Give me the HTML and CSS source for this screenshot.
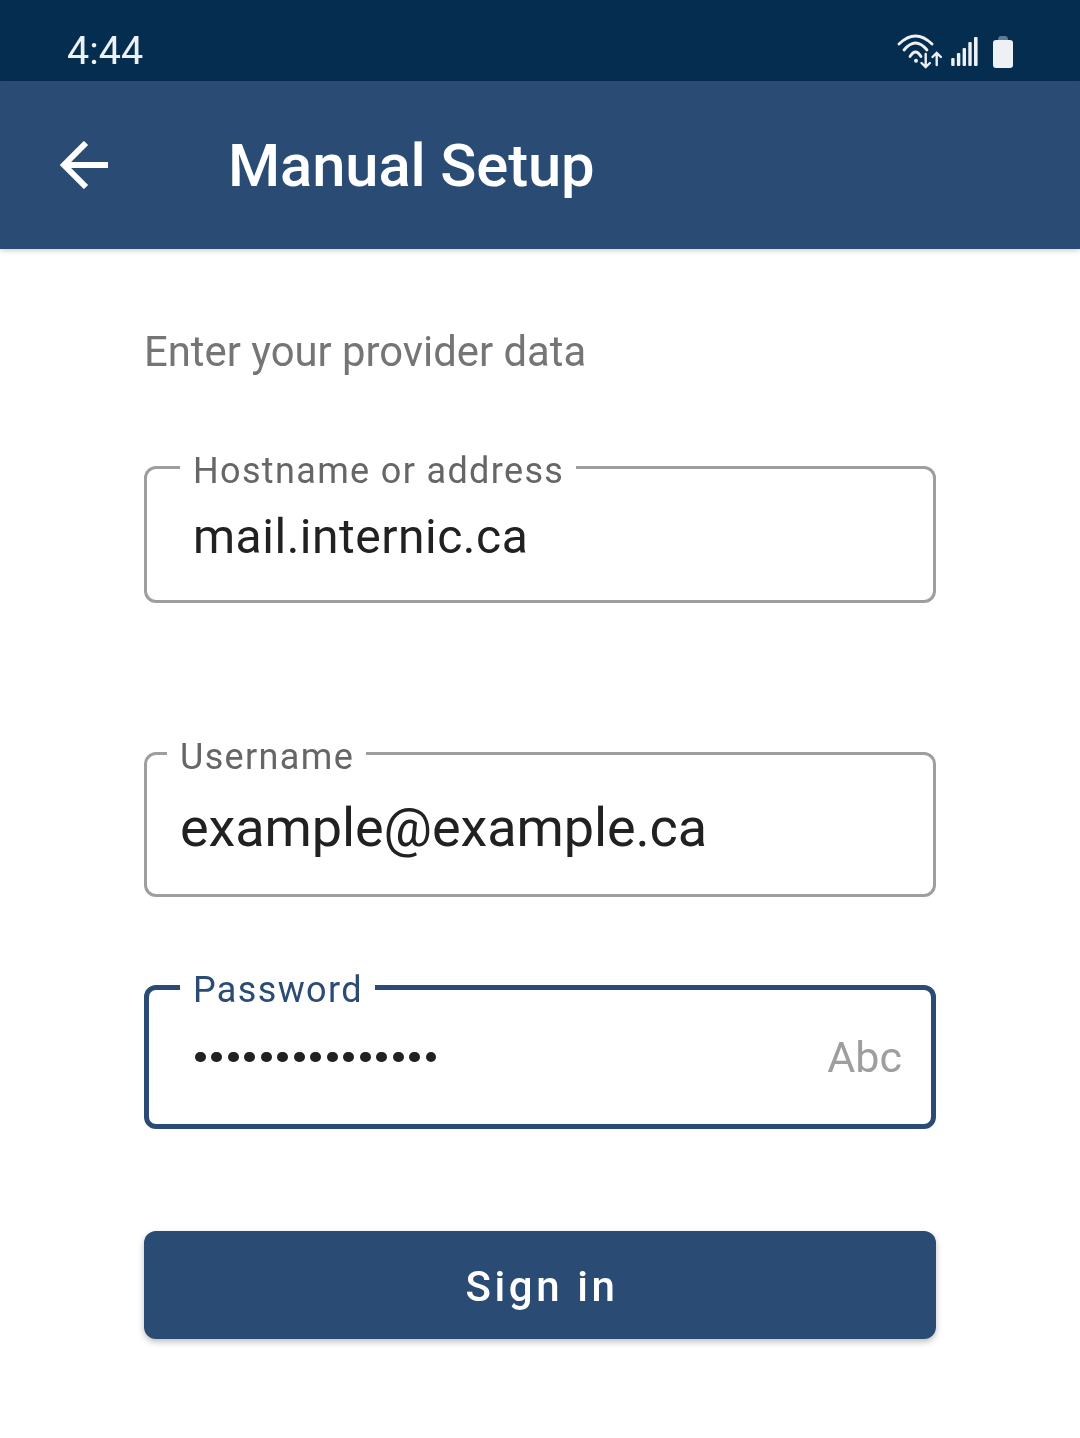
FILE: index.html
```html
<!DOCTYPE html>
<html lang="en">
<head>
<meta charset="utf-8">
<title>Manual Setup</title>
<link rel="stylesheet" href="styles.css">
</head>
<body>
<div class="status">
  <span class="time">4:44</span>
  <div class="status-icons">
    <svg class="ic-wifi" width="46" height="36" viewBox="0 0 46 36" fill="none" stroke="#eef0f3" stroke-linecap="round">
      <path d="M2 10Q18.500 -6 35 10" stroke-width="2.800"/>
      <path d="M7 16Q18.500 2 30 16" stroke-width="2.800"/>
      <path d="M13 22.500Q18.500 13.500 24 22.500" stroke-width="2.800"/>
      <circle cx="19" cy="26.700" r="2" fill="#eef0f3" stroke="none"/>
      <path d="M28.700 20V33M24.500 29l4.200 4 4.200-4" stroke-width="2.400"/>
      <path d="M39.700 31V19.500M35.500 23l4.200-4 4.200 4" stroke-width="2.400"/>
    </svg>
    <svg class="ic-signal" width="28" height="30" viewBox="0 0 28 30" fill="#eef0f3">
      <rect x="0.200" y="21" width="3.400" height="8" rx="1"/>
      <rect x="5.900" y="16" width="3.400" height="13" rx="1"/>
      <rect x="11.600" y="11" width="3.400" height="18" rx="1"/>
      <rect x="17.300" y="5" width="3.400" height="24" rx="1"/>
      <rect x="23" y="0" width="3.600" height="29" rx="1"/>
    </svg>
    <svg class="ic-batt" width="20" height="32" viewBox="0 0 20 32">
      <path d="M5 4q0-4 3-4h4q3 0 3 4v3H5z" fill="#5d7c96"/>
      <path d="M0 7q0-3 3-3h14q3 0 3 3v22q0 3-3 3H3q-3 0-3-3z" fill="#eef0f3"/>
    </svg>
  </div>
</div>
<header class="appbar">
  <svg class="back" width="48" height="48" viewBox="0 0 48 48" fill="none" stroke="#fff" stroke-width="6">
    <path d="M48 24H4"/>
    <path d="M26 2 4 24l22 22" stroke-linejoin="miter"/>
  </svg>
  <h1 class="title">Manual Setup</h1>
</header>
<main class="content">
  <p class="hint">Enter your provider data</p>
  <fieldset class="field field-host">
    <legend class="label">Hostname or address</legend>
    <div class="value value-host">mail.internic.ca</div>
  </fieldset>
  <fieldset class="field field-user">
    <legend class="label">Username</legend>
    <div class="value value-user">example@example.ca</div>
  </fieldset>
  <fieldset class="field field-pass">
    <legend class="label">Password</legend>
    <div class="pass-row">
      <span class="dots"><i></i><i></i><i></i><i></i><i></i><i></i><i></i><i></i><i></i><i></i><i></i><i></i><i></i><i></i><i></i></span>
      <span class="abc">Abc</span>
    </div>
  </fieldset>
  <button class="signin" type="button">Sign in</button>
</main>
</body>
</html>
```
FILE: styles.css
```css
* { box-sizing: border-box; }
html, body { margin: 0; padding: 0; }
body {
  width: 1080px;
  height: 1438px;
  background: #fff;
  font-family: Roboto, "Liberation Sans", sans-serif;
  overflow: hidden;
}
.status {
  height: 81px;
  background: #042d4f;
  display: flex;
  align-items: center;
  justify-content: space-between;
  padding: 0 67px;
  color: #fff;
}
.time { font-size: 39.500px; line-height: 44px; margin-top: 20px; color: #eef1f4; will-change: transform; }
.status-icons { display: flex; align-self: flex-start; margin-top: 34px; }
.ic-wifi { margin-right: 8px; display: block; }
.ic-signal { margin: 3px 14px 0 0; display: block; }
.ic-batt { display: block; margin-top: 2px; }
.appbar {
  height: 168px;
  background: #2a4b73;
  display: flex;
  align-items: center;
  padding-left: 60px;
  box-shadow: 0 2px 5px rgba(0,0,0,.18);
  position: relative;
}
.back { display: block; }
.title {
  margin: 2px 0 0 120px;
  font-size: 59.700px;
  line-height: 70px;
  font-weight: 500;
  color: #fff;
  letter-spacing: -.1px;
  will-change: transform;
}
.content { padding: 0 144px; display: flex; flex-direction: column; will-change: transform; }
.hint {
  margin: 76px 0 0;
  font-size: 41.800px;
  line-height: 54px;
  color: #757575;
}
.field {
  margin: 0;
  padding: 0;
  min-width: 0;
  border: 3px solid #9e9e9e;
  border-radius: 12px;
}
.label {
  font-size: 36px;
  line-height: 43px;
  letter-spacing: 1.350px;
  color: #666;
  padding: 9px 12px 1px 13px;
}
.value { color: #212121; }
.field-host { margin-top: 62px; height: 162px; }
.field-host .label { margin-left: 33px; }
.value-host { padding-left: 46px; font-size: 48px; line-height: 58px; margin-top: 14px; letter-spacing: .52px; }
.field-user { margin-top: 124px; height: 170px; }
.field-user .label { margin-left: 20px; }
.value-user { padding-left: 33px; line-height: 62px; margin-top: 17px; font-size: 54px; letter-spacing: -.1px; }
.field-pass {
  margin-top: 64px;
  height: 168px;
  border: 5px solid #2a4b73;
  padding-right: 29px;
}
.field-pass .label { margin-left: 31px; color: #2a4b73; padding-top: 8px; padding-bottom: 2px; }
.pass-row { display: flex; justify-content: space-between; align-items: center; padding-left: 46px; margin-top: 15px; height: 56px; }
.dots { display: flex; gap: 5.800px; }
.dots i { display: block; width: 10.700px; height: 10.700px; border-radius: 50%; background: #212121; }
.abc { font-size: 43px; line-height: 50px; color: #9e9e9e; }
.signin {
  margin-top: 102px;
  height: 108px;
  border: 0;
  border-radius: 12px;
  background: #2a4b73;
  color: #fff;
  font-family: inherit;
  font-size: 42px;
  font-weight: 500;
  letter-spacing: 3.600px;
  padding: 2px 0 0 4px;
  box-shadow: 0 3px 6px rgba(0,0,0,.25);
}
```
